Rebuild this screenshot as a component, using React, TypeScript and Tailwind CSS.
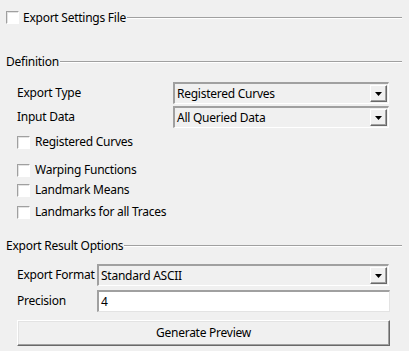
import React from "react";

function Check({ label, className = "" }: { label: string; className?: string }) {
  return (
    <div className={`flex items-center ${className}`}>
      <div className="w-[13px] h-[13px] bg-white border border-t-[#a0a0a0] border-l-[#a0a0a0] border-r-[#ffffff] border-b-[#ffffff] shadow-[inset_1px_1px_0_#e3e3e3]" />
      <span className="ml-[5px] whitespace-nowrap">{label}</span>
    </div>
  );
}

function Groove() {
  return (
    <div className="flex-1 ml-[1px] mr-[7px] flex flex-col">
      <div className="h-[1px] bg-[#a0a0a0]" />
      <div className="h-[1px] bg-white" />
    </div>
  );
}

function Combo({ value, className = "" }: { value: string; className?: string }) {
  return (
    <div
      className={`h-[22px] shrink-0 flex items-stretch border-t-2 border-l-2 border-t-[#a0a0a0] border-l-[#a0a0a0] border-r border-b border-r-white border-b-white bg-[#f0f0f0] ${className}`}
    >
      <div className="flex-1 flex items-center pl-[2px] whitespace-nowrap">{value}</div>
      <div className="w-[17px] my-[1px] mr-[1px] flex items-center justify-center bg-[#f0f0f0] border border-t-white border-l-white border-r-[#696969] border-b-[#696969] shadow-[inset_-1px_-1px_0_#a0a0a0]">
        <svg width="7" height="4" viewBox="0 0 7 4">
          <path d="M0 0H7L3.5 4Z" fill="#000" />
        </svg>
      </div>
    </div>
  );
}

export default function App() {
  return (
    <div
      className="w-[409px] h-[351px] bg-[#f0f0f0] text-black text-[12px] tracking-[-0.25px] leading-none overflow-hidden"
      style={{ fontFamily: '"Noto Sans", "Open Sans", sans-serif' }}
    >
      <div className="h-[8px]" />
      <div className="h-[19px] flex items-center pl-[6px]">
        <div className="w-[13px] h-[13px] bg-white border border-t-[#a0a0a0] border-l-[#a0a0a0] border-r-white border-b-white shadow-[inset_1px_1px_0_#e3e3e3]" />
        <span className="ml-[4px] whitespace-nowrap">Export Settings File</span>
        <Groove />
      </div>
      <div className="h-[26px]" />
      <div className="h-[18px] flex items-center pl-[6px]">
        <span>Definition</span>
        <Groove />
      </div>
      <div className="h-[11px]" />
      <div className="h-[22px] flex items-center pl-[17px]">
        <span className="w-[156px] shrink-0 whitespace-nowrap">Export Type</span>
        <Combo value="Registered Curves" className="w-[216px]" />
      </div>
      <div className="h-[2px]" />
      <div className="h-[22px] flex items-center pl-[17px]">
        <span className="w-[156px] shrink-0 whitespace-nowrap">Input Data</span>
        <Combo value="All Queried Data" className="w-[216px]" />
      </div>
      <div className="h-[5px]" />
      <Check label="Registered Curves" className="h-[18px] pl-[17px]" />
      <div className="h-[10px]" />
      <Check label="Warping Functions" className="h-[18px] pl-[17px]" />
      <div className="h-[2px]" />
      <Check label="Landmark Means" className="h-[18px] pl-[17px]" />
      <div className="h-[4px]" />
      <Check label="Landmarks for all Traces" className="h-[18px] pl-[17px]" />
      <div className="h-[16px]" />
      <div className="h-[18px] flex items-center pl-[6px]">
        <span className="whitespace-nowrap">Export Result Options</span>
        <Groove />
      </div>
      <div className="h-[9px]" />
      <div className="h-[22px] flex items-center pl-[17px]">
        <span className="w-[80px] shrink-0 whitespace-nowrap">Export Format</span>
        <Combo value="Standard ASCII" className="w-[292px]" />
      </div>
      <div className="h-[4px]" />
      <div className="h-[22px] flex items-center pl-[17px]">
        <span className="w-[80px] shrink-0 whitespace-nowrap">Precision</span>
        <div className="w-[293px] shrink-0 h-[22px] flex items-center pl-[2px] bg-white border-t-2 border-l-2 border-t-[#a0a0a0] border-l-[#a0a0a0] border-r border-b border-r-[#e3e3e3] border-b-[#e3e3e3]">
          4
        </div>
      </div>
      <div className="h-[8px]" />
      <div className="pl-[17px]">
        <div className="w-[373px] h-[26px] flex items-center justify-center bg-[#f0f0f0] border border-t-white border-l-white border-r-[#696969] border-b-[#696969] shadow-[inset_-1px_-1px_0_#a0a0a0,inset_1px_1px_0_#e3e3e3]">
          Generate Preview
        </div>
      </div>
    </div>
  );
}
